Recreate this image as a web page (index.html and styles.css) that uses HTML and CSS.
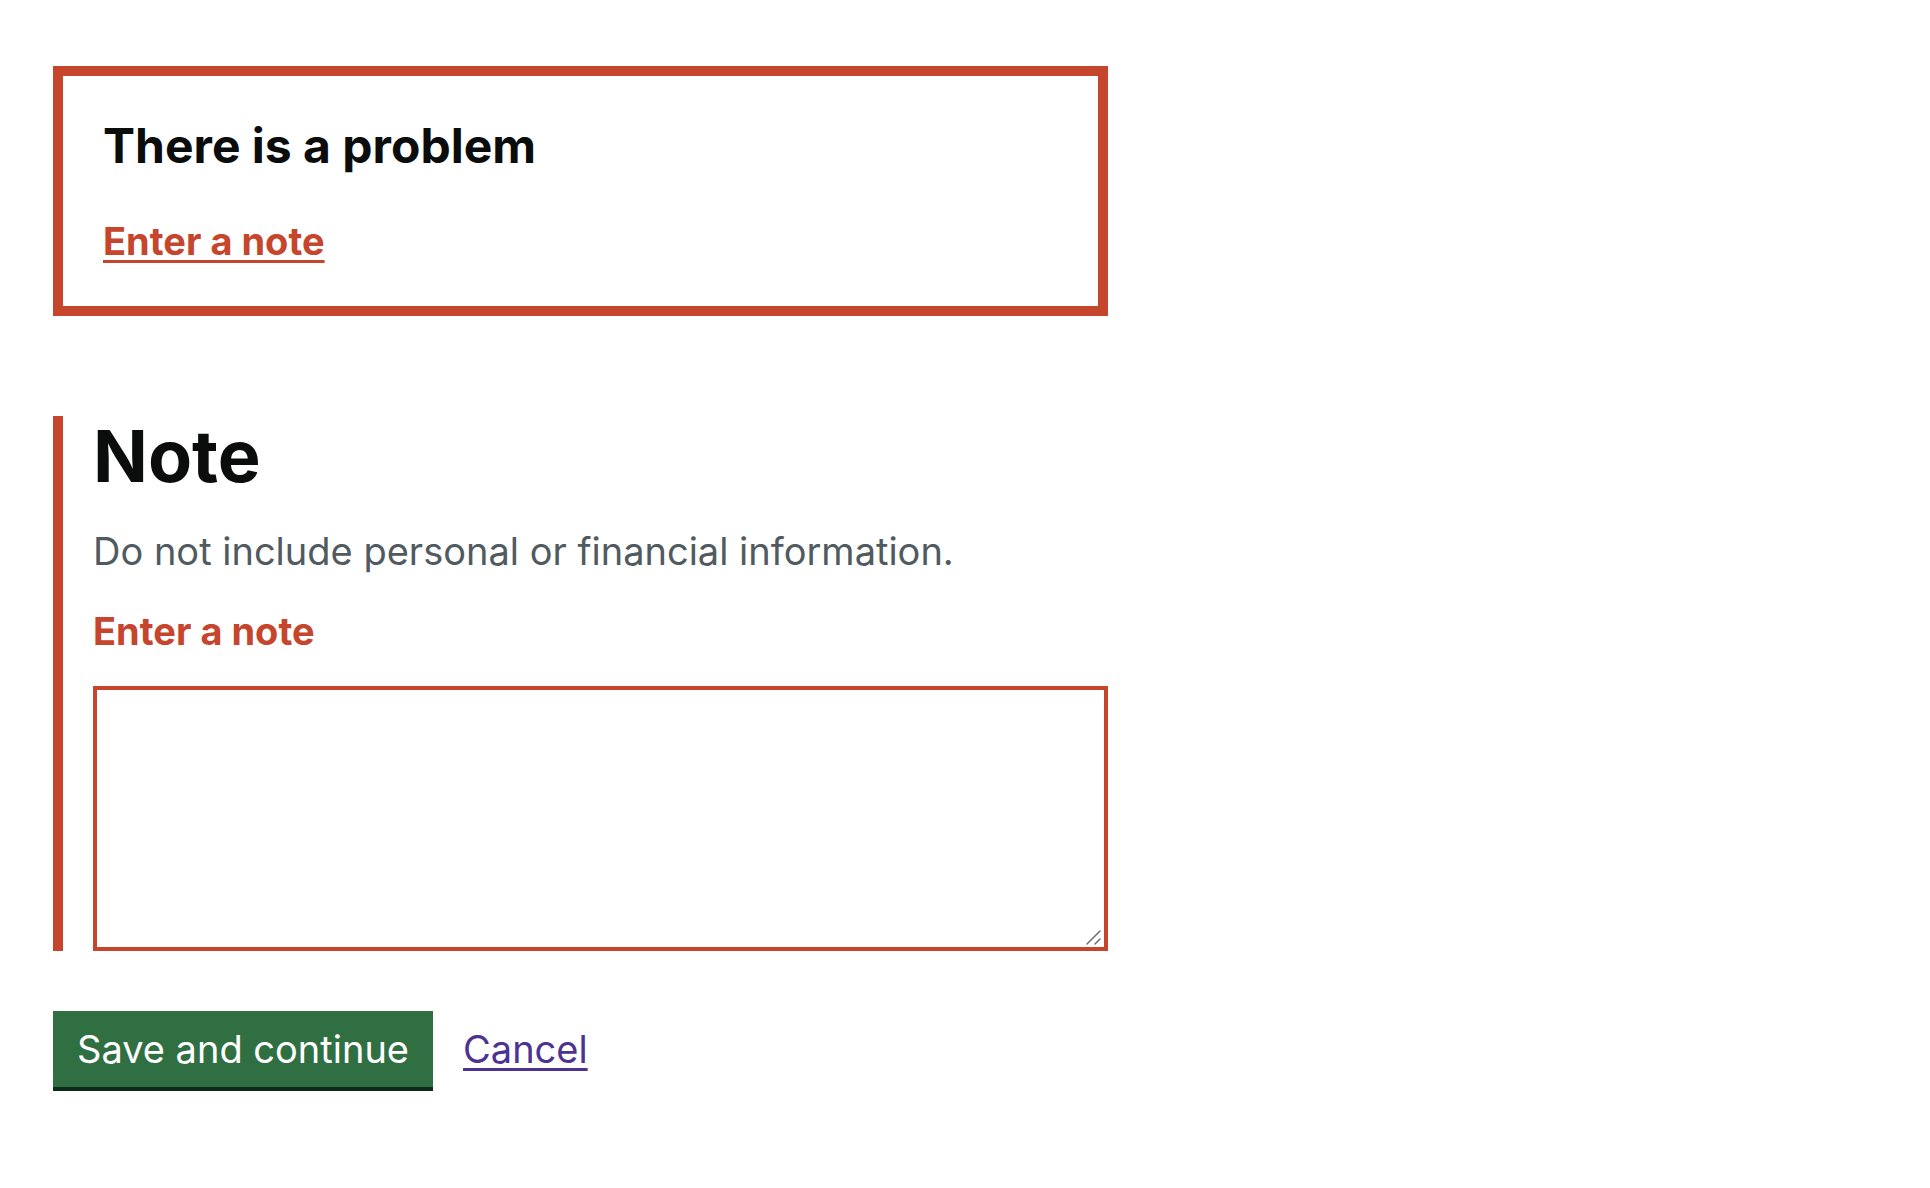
FILE: index.html
```html
<!DOCTYPE html>
<html lang="en">
<head>
<meta charset="utf-8">
<title>Note</title>
<link rel="stylesheet" href="styles.css">
</head>
<body>
<main class="page">
  <div class="error-summary" role="alert">
    <h2 class="error-summary__title">There is a problem</h2>
    <ul class="error-summary__list">
      <li><a class="error-summary__link" href="#note">Enter a note</a></li>
    </ul>
  </div>

  <form class="form">
    <div class="form-group form-group--error">
      <fieldset class="fieldset">
        <legend class="legend">Note</legend>
        <div class="hint">Do not include personal or financial information.</div>
        <p class="error-message">Enter a note</p>
        <div class="textarea-wrap">
          <textarea class="textarea" id="note" name="note" rows="5"></textarea>
          <svg class="grip" width="18" height="18" viewBox="0 0 18 18" aria-hidden="true">
            <line x1="2" y1="16" x2="15" y2="3" stroke="#6a6a6a" stroke-width="1.4" stroke-linecap="round"/>
            <line x1="10" y1="16" x2="15" y2="11" stroke="#6a6a6a" stroke-width="1.4" stroke-linecap="round"/>
          </svg>
        </div>
      </fieldset>
    </div>
    <div class="button-group">
      <button class="button" type="button">Save and continue</button>
      <a class="link" href="#">Cancel</a>
    </div>
  </form>
</main>
</body>
</html>
```

FILE: styles.css
```css
html, body {
  margin: 0;
  padding: 0;
  background: #ffffff;
}

body {
  font-family: Inter, "Liberation Sans", Arial, sans-serif;
  color: #0b0c0c;
}

.page {
  width: 1055px;
  padding: 66px 0 0 53px;
}

.error-summary {
  border: 10px solid #c5462c;
  padding: 40px;
  margin-bottom: 100px;
}

.error-summary__title {
  margin: 0 0 40px;
  font-size: 48px;
  line-height: 60px;
  font-weight: 700;
}

.error-summary__list {
  list-style: none;
  margin: 0;
  padding: 0;
}

.error-summary__link {
  color: #c5462c;
  font-size: 38px;
  line-height: 50px;
  font-weight: 700;
  text-decoration: underline;
  text-decoration-thickness: 3px;
  text-underline-offset: 5px;
}

.form {
  margin: 0;
}

.form-group {
  margin-bottom: 60px;
}

.form-group--error {
  border-left: 10px solid #c5462c;
  padding-left: 30px;
}

.fieldset {
  margin: 0;
  padding: 0;
  border: 0;
  min-width: 0;
}

.legend {
  padding: 0;
  margin: 0 0 30px;
  font-size: 72px;
  line-height: 80px;
  font-weight: 700;
  color: #0b0c0c;
}

.hint {
  margin-bottom: 30px;
  font-size: 38px;
  line-height: 50px;
  color: #505a5f;
}

.error-message {
  margin: 0 0 30px;
  font-size: 38px;
  line-height: 50px;
  font-weight: 700;
  color: #c5462c;
}

.textarea-wrap {
  position: relative;
}

.textarea {
  display: block;
  box-sizing: border-box;
  width: 100%;
  height: 265px;
  margin: 0;
  padding: 10px;
  border: 4px solid #c5462c;
  border-radius: 0;
  font-family: Inter, "Liberation Sans", Arial, sans-serif;
  font-size: 38px;
  line-height: 1.25;
  resize: none;
  background: #fff;
}

.grip {
  position: absolute;
  right: 5px;
  bottom: 5px;
  pointer-events: none;
}

.button-group {
  display: flex;
  align-items: flex-start;
  gap: 30px;
}

.button {
  box-sizing: border-box;
  height: 80px;
  padding: 0 24px;
  border: 0;
  border-bottom: 4px solid #0d2b19;
  border-radius: 0;
  background: #306f42;
  color: #ffffff;
  font-family: Inter, "Liberation Sans", Arial, sans-serif;
  font-size: 38px;
  line-height: 76px;
  font-weight: 400;
  cursor: pointer;
}

.link {
  color: #4c3392;
  font-size: 38px;
  line-height: 76px;
  text-decoration: underline;
  text-decoration-thickness: 3px;
  text-underline-offset: 5px;
}
```
